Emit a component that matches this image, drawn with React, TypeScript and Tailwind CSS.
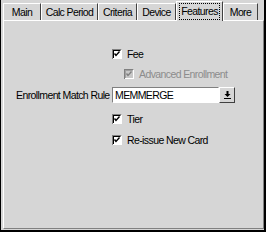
import React from 'react';

const tabs = [
    { label: 'Main', w: 'w-[38px]' },
    { label: 'Calc Period', w: 'w-[57px]' },
    { label: 'Criteria', w: 'w-[39px]' },
    { label: 'Device', w: 'w-[39px]' },
    { label: 'Features', w: 'w-[47px]', active: true },
    { label: 'More', w: 'w-[35px]' },
];

const Check: React.FC<{ disabled?: boolean }> = ({ disabled }) => (
    <svg width="10" height="10" viewBox="0 0 10 10" className="shrink-0">
        <rect x="0" y="0" width="10" height="10" fill="#ffffff" />
        <rect x="1" y="1" width="8" height="8" fill={disabled ? '#c8c8c8' : '#ffffff'} />
        <path d="M0 0.5H9.5M0.5 0V10" stroke="#808080" />
        <path d="M1 1.5H8.5M1.5 1V9" stroke={disabled ? '#a0a0a0' : '#000000'} />
        <path d="M2.5 4.5L4 6.5L7.5 2.5" stroke={disabled ? '#808080' : '#000000'} strokeWidth="1.4" fill="none" />
    </svg>
);

const CheckRow: React.FC<{ label: string; disabled?: boolean; indent?: string; extra?: string }> = ({ label, disabled, indent, extra }) => (
    <div className={`flex items-center gap-[5px] h-[12px] ${indent ?? 'pl-[108px]'} ${extra ?? ''}`}>
        <Check disabled={disabled} />
        <span className={disabled ? 'text-[#8c8c8c]' : 'text-black'}>{label}</span>
    </div>
);

export default function App() {
    return (
        <div className="w-[266px] h-[232px] bg-[#d6d6d6] border-l border-black border-r-2 border-b-2 font-['Liberation_Sans',Arial,sans-serif] text-[10.5px] tracking-[-0.6px] text-black leading-none select-none">
            <div className="flex flex-col h-full pl-[2px] pb-[1px]">
                {/* tab strip */}
                <div className="flex items-end h-[20px] shrink-0">
                    {tabs.map((t) =>
                        t.active ? (
                            <div
                                key={t.label}
                                className={`${t.w} h-[20px] -mb-[1px] relative z-10 bg-[#d6d6d6] border-t border-l border-white border-r border-r-[#404040] flex items-center justify-center`}
                            >
                                <span className="border border-dotted border-black px-[1px] py-[2px]">{t.label}</span>
                            </div>
                        ) : (
                            <div
                                key={t.label}
                                className={`${t.w} h-[17px] border-t border-l border-white border-r border-r-[#404040] flex items-center justify-center pt-[1px]`}
                            >
                                {t.label}
                            </div>
                        )
                    )}
                </div>
                {/* panel */}
                <div className="flex-1 border-t border-l border-white border-r border-r-[#808080] border-b border-b-[#808080] flex flex-col pt-[27px]">
                    <CheckRow label="Fee" />
                    <CheckRow label="Advanced Enrollment" disabled indent="pl-[120px]" extra="mt-[8px]" />
                    <div className="flex items-center h-[16px] mt-[7px]">
                        <span className="pl-[12px] w-[108px]">Enrollment Match Rule</span>
                        <div className="w-[107px] h-[16px] bg-white border border-[#808080] border-r-white border-b-white flex items-center pl-[2px]">
                            MEMMERGE
                        </div>
                        <div className="w-[16px] h-[16px] bg-[#d6d6d6] border border-white border-r-[#404040] border-b-[#404040] flex items-center justify-center">
                            <svg width="7" height="8" viewBox="0 0 7 8">
                                <path d="M2.5 0H4.5V3H6.5L3.5 6L0.5 3H2.5Z" fill="#000" />
                                <rect x="0" y="7" width="7" height="1" fill="#000" />
                            </svg>
                        </div>
                    </div>
                    <CheckRow label="Tier" extra="mt-[10px]" />
                    <CheckRow label="Re-issue New Card" extra="mt-[9px]" />
                </div>
            </div>
        </div>
    );
}
